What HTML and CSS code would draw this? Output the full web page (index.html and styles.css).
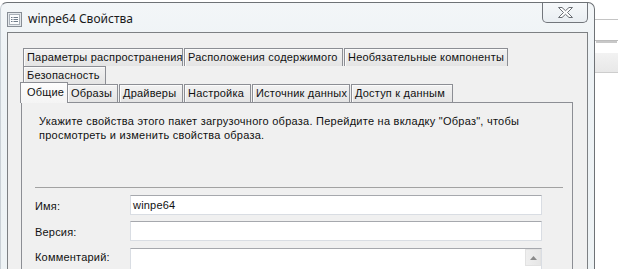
FILE: index.html
```html
<!DOCTYPE html>
<html lang="ru">
<head>
    <meta charset="UTF-8">
    <title>winpe64 Свойства</title>
    <link rel="stylesheet" href="styles.css">
</head>
<body>
    <div class="desk">
        <div class="window">
            <div class="titlebar">
                <svg class="app-icon" width="15" height="15" viewBox="0 0 15 15">
                    <rect x="0.5" y="0.5" width="14" height="14" fill="#e4e8ec" stroke="#878d95"/>
                    <rect x="2.5" y="2.5" width="10" height="10" fill="#fbfcfd" stroke="#aab1b9"/>
                    <path d="M4 5.5h1.5M6.5 5.5h4.5M4 7.5h1.5M6.5 7.5h4.5M4 9.5h1.5M6.5 9.5h4.5" stroke="#6f7b89"/>
                </svg>
                <span class="title">winpe64 Свойства</span>
                <div class="close">
                    <svg width="15" height="11" viewBox="0 0 15 11">
                        <polygon points="0.5,0.5 4,0.5 7.5,3.7 11,0.5 14.5,0.5 9.5,5.5 14.5,10.5 11,10.5 7.5,7.3 4,10.5 0.5,10.5 5.5,5.5" fill="#fff" stroke="#6b6f75"/>
                    </svg>
                </div>
            </div>
            <div class="client">
                <div class="tabs">
                    <div class="tab-row">
                        <div class="tab w160">Параметры распространения</div>
                        <div class="tab w159">Расположения содержимого</div>
                        <div class="tab w164">Необязательные компоненты</div>
                    </div>
                    <div class="tab-row">
                        <div class="tab w83">Безопасность</div>
                    </div>
                    <div class="tab-row front">
                        <div class="tab selected">Общие</div>
                        <div class="tab w51">Образы</div>
                        <div class="tab w64">Драйверы</div>
                        <div class="tab w67">Настройка</div>
                        <div class="tab w98">Источник данных</div>
                        <div class="tab w102">Доступ к данным</div>
                    </div>
                    <div class="panel">
                        <p class="hint">Укажите свойства этого пакет загрузочного образа. Перейдите на вкладку "Образ", чтобы<br>просмотреть и изменить свойства образа.</p>
                        <div class="group">
                            <div class="field">
                                <span class="label">Имя:</span>
                                <div class="input">winpe64</div>
                            </div>
                            <div class="field">
                                <span class="label">Версия:</span>
                                <div class="input"></div>
                            </div>
                            <div class="field memo-field">
                                <span class="label">Комментарий:</span>
                                <div class="input memo">
                                    <div class="scroll-up">
                                        <svg width="7" height="4" viewBox="0 0 7 4"><path d="M0 4L3.5 0L7 4Z" fill="#8a8a8a"/></svg>
                                    </div>
                                </div>
                            </div>
                        </div>
                    </div>
                </div>
            </div>
        </div>
        <div class="behind">
            <div class="strip-top"></div>
            <div class="strip-rule"></div>
            <div class="strip-band"></div>
        </div>
    </div>
</body>
</html>
```
FILE: styles.css
```css
body {
    margin: 0;
    font-family: "Liberation Sans", Arial, sans-serif;
    font-size: 11px;
    letter-spacing: 0.2px;
    color: #111;
    background-color: #fff;
    overflow: hidden;
}
.desk {
    display: flex;
    height: 269px;
    padding-top: 2px;
    box-sizing: border-box;
}
.window {
    width: 595px;
    flex-shrink: 0;
    box-sizing: border-box;
    padding: 0 6px;
    border: 1px solid #6e7276;
    border-left-color: #c9d0d6;
    border-bottom: none;
    border-radius: 7px 7px 0 0;
    background: linear-gradient(to bottom, #f3f6f8, #edf2f5 60px, #eef3f5);
}
.titlebar {
    display: flex;
    align-items: flex-start;
    height: 29px;
}
.app-icon {
    margin-top: 9px;
    flex-shrink: 0;
}
.title {
    margin-left: 6px;
    margin-top: 8px;
    font-family: "Noto Sans", "Open Sans", sans-serif;
    font-size: 12px;
    line-height: 16px;
    letter-spacing: 0;
    color: #1a1a1a;
}
.close {
    margin-left: auto;
    width: 46px;
    height: 20px;
    box-sizing: border-box;
    border: 1px solid #72767c;
    border-top: none;
    border-radius: 0 0 5px 5px;
    background: linear-gradient(to bottom, #f6f8fa, #e9eef2);
    display: flex;
    justify-content: center;
    align-items: center;
}
.client {
    height: 240px;
    border: 1px solid #7d8083;
    border-bottom: none;
    background-color: #f0f0f0;
    padding: 15px 0 0 13px;
}
.tabs {
    width: 552px;
    display: flex;
    flex-direction: column;
}
.tab-row {
    display: flex;
    gap: 1px;
    height: 18px;
    padding-left: 2px;
}
.tab-row.front {
    padding-left: 1px;
}
.tab {
    height: 18px;
    box-sizing: border-box;
    padding-left: 3px;
    line-height: 16px;
    border: 1px solid #8c8e94;
    border-bottom: none;
    background: linear-gradient(to bottom, #f2f2f2, #e4e4e4);
    box-shadow: inset 1px 1px 0 #fbfbfb;
    white-space: nowrap;
}
.tab.selected {
    position: relative;
    z-index: 1;
    width: 48px;
    height: 21px;
    margin: -2px -2px -1px -2px;
    padding-left: 6px;
    line-height: 19px;
    background: linear-gradient(to bottom, #fdfdfd, #f4f4f4);
    box-shadow: none;
}
.w51 { width: 51px; }
.w64 { width: 64px; }
.w67 { width: 67px; }
.w83 { width: 83px; }
.w98 { width: 98px; }
.w102 { width: 102px; }
.w159 { width: 159px; }
.w160 { width: 160px; }
.w164 { width: 164px; }
.panel {
    height: 170px;
    border: 1px solid #8c8e94;
    background-color: #f0f0f0;
}
.hint {
    margin: 11px 0 0 17px;
    line-height: 14px;
    letter-spacing: 0.25px;
}
.group {
    margin: 45px 9px 0 13px;
    padding-top: 7px;
    border-top: 1px solid #a2a2a2;
    display: flex;
    flex-direction: column;
    gap: 6px;
}
.field {
    display: flex;
    align-items: center;
}
.field.memo-field {
    align-items: flex-start;
    margin-top: 1px;
}
.label {
    width: 95px;
    flex-shrink: 0;
    padding-top: 2px;
}
.memo-field .label {
    padding-top: 3px;
}
.input {
    width: 412px;
    height: 20px;
    box-sizing: border-box;
    border: 1px solid #d9dde3;
    border-top-color: #a6a8ad;
    background-color: #fff;
    padding-left: 2px;
    line-height: 18px;
    color: #111;
}
.input.memo {
    height: 30px;
    display: flex;
    justify-content: flex-end;
    padding: 0;
}
.scroll-up {
    width: 16px;
    height: 17px;
    background: linear-gradient(to right, #efefef, #e6e6e6);
    border: 1px solid #e2e2e2;
    box-sizing: border-box;
    display: flex;
    justify-content: center;
    align-items: center;
}
.behind {
    flex: 1;
    display: flex;
    flex-direction: column;
    margin-top: -2px;
}
.strip-top {
    height: 19px;
    border-bottom: 1px solid #c4c4c4;
}
.strip-rule {
    height: 20px;
    border-bottom: 1px solid #bcbcbc;
    box-shadow: 0 3px 0 -1px #c8c8c8;
}
.strip-band {
    height: 19px;
    margin-top: 12px;
    background: linear-gradient(to bottom, #f2f2f2, #e8e8e8);
    border-bottom: 1px solid #cdcdcd;
}
```
